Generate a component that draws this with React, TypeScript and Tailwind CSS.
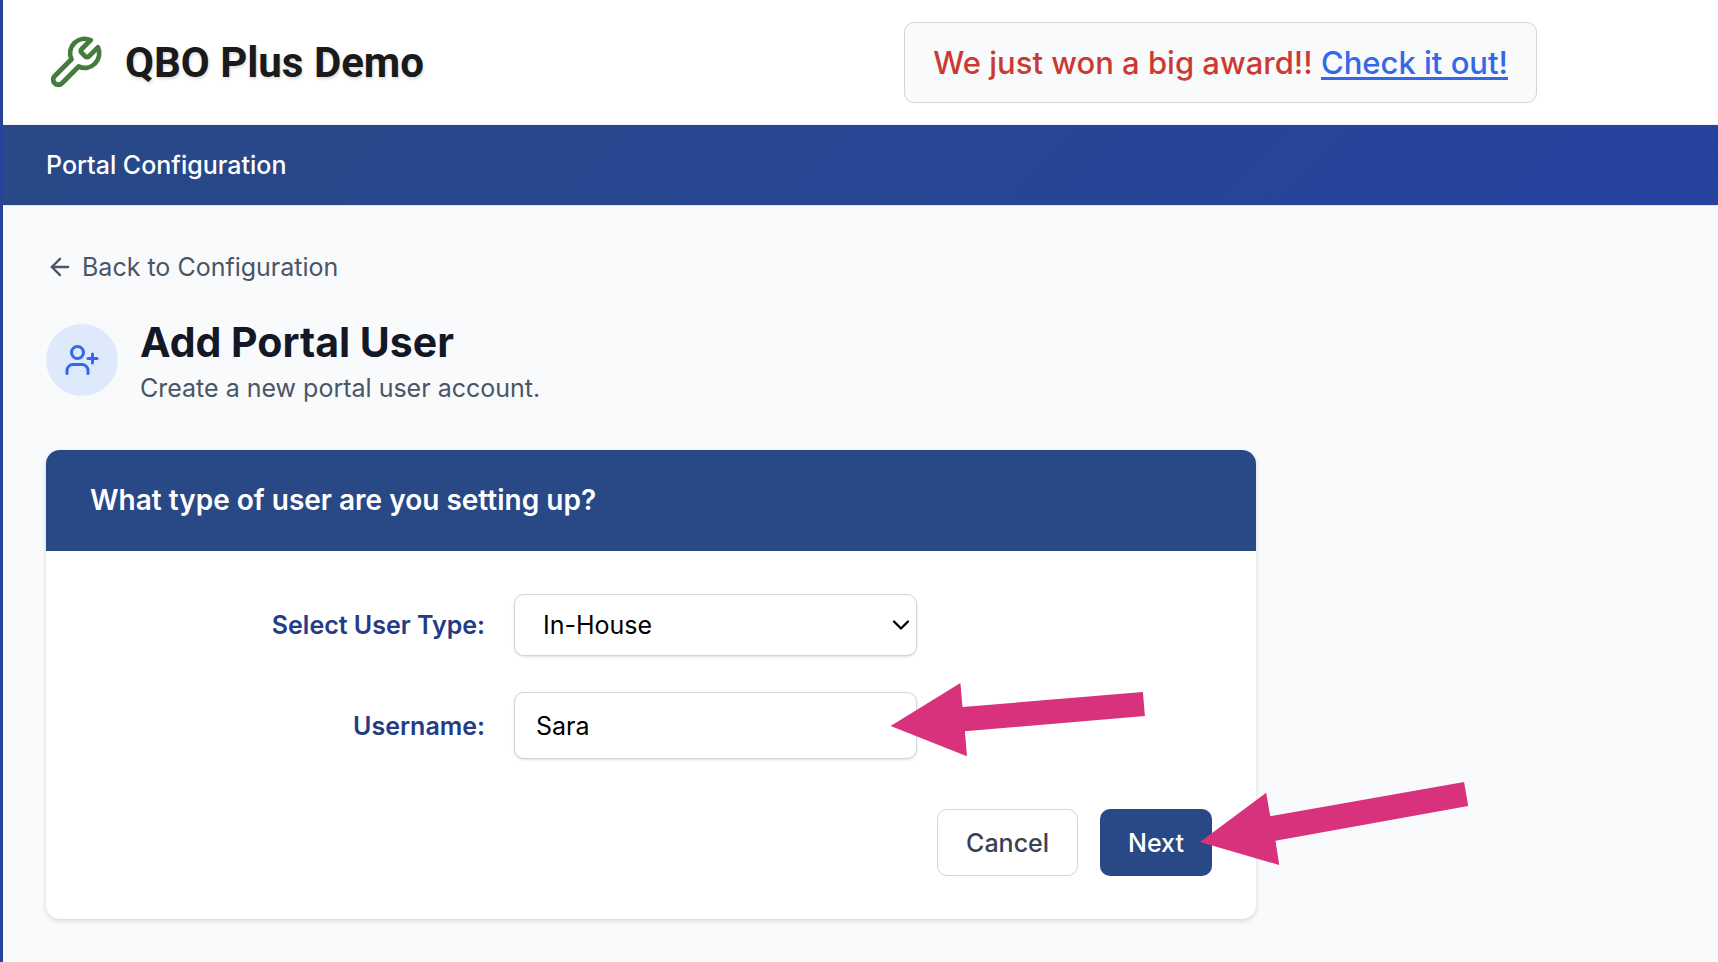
import { useState } from "react";
import { ArrowLeft, ChevronDown, UserPlus } from "lucide-react";

const Header = () => {
  return (
    <header className="border-b border-slate-100 bg-white">
      <div className="flex max-w-[1534px] items-center justify-between pt-[22px] pb-[21px] pl-[43px]">
        <div className="flex items-center gap-[21px]">
          <svg
            viewBox="0 0 24 24"
            fill="none"
            stroke="currentColor"
            strokeWidth="2"
            strokeLinecap="round"
            strokeLinejoin="round"
            className="size-[58px] text-[#437c3d]"
            aria-hidden="true"
          >
            <path d="M14.7 6.3a1 1 0 0 0 0 1.4l1.6 1.6a1 1 0 0 0 1.4 0l3.77-3.77a6 6 0 0 1-7.94 7.94l-6.91 6.91a2.12 2.12 0 0 1-3-3l6.91-6.91a6 6 0 0 1 7.94-7.94l-3.76 3.76z" />
          </svg>
          <span className="font-[Roboto,sans-serif] text-[42px] leading-[56px] font-bold text-[#1a1a1a] [text-shadow:1px_2px_3px_rgba(0,0,0,0.15)]">
            QBO Plus Demo
          </span>
        </div>
        <p className="rounded-[10px] border border-gray-300 bg-gray-50 px-[28px] py-[19px] text-[31px] leading-[41px] font-medium text-[#cb3a32]">
          We just won a big award!!{" "}
          <a
            href="#award"
            className="text-[#3568e8] underline decoration-[3px] underline-offset-[3px]"
          >
            Check it out!
          </a>
        </p>
      </div>
    </header>
  );
};

const UserForm = () => {
  const [userType, setUserType] = useState("In-House");
  const [username, setUsername] = useState("Sara");

  return (
    <form
      onSubmit={(e) => e.preventDefault()}
      className="mt-[44px] max-w-[1210px] rounded-[14px] bg-white shadow-[0_2px_5px_rgba(0,0,0,0.14)]"
    >
      <h2 className="rounded-t-[14px] bg-[#294886] px-[44px] py-[30px] text-[28px] leading-[41px] font-semibold text-white">
        What type of user are you setting up?
      </h2>
      <div className="px-[44px] py-[43px]">
        <div className="grid grid-cols-[395fr_403fr_266fr] items-center gap-[29px]">
          <label
            htmlFor="user-type"
            className="text-right font-semibold text-[#243b86]"
          >
            Select User Type:
          </label>
          <div className="relative">
            <select
              id="user-type"
              value={userType}
              onChange={(e) => setUserType(e.target.value)}
              className="block h-[62px] w-full appearance-none rounded-[10px] border border-gray-300 bg-white px-[28px] text-black shadow-sm"
            >
              <option>In-House</option>
              <option>Customer</option>
            </select>
            <ChevronDown
              className="pointer-events-none absolute top-[17px] right-[2px] size-[28px] text-black"
              strokeWidth={2}
            />
          </div>
        </div>
        <div className="mt-[36px] grid grid-cols-[395fr_403fr_266fr] items-center gap-[29px]">
          <label
            htmlFor="username"
            className="text-right font-semibold text-[#243b86]"
          >
            Username:
          </label>
          <div className="relative">
            <input
              id="username"
              type="text"
              value={username}
              onChange={(e) => setUsername(e.target.value)}
              className="block h-[67px] w-full rounded-[10px] border border-gray-300 bg-white px-[21px] text-black shadow-sm"
            />
            <svg
              viewBox="0 0 256 76"
              className="pointer-events-none absolute -top-[10px] left-[376px] h-[76px] w-[256px] max-w-none"
              aria-hidden="true"
            >
              <path
                d="M0.6 44 70.4 1 72.5 25 252.9 10 254.9 34 74.9 49.3 77 74.3Z"
                fill="#d8327c"
              />
            </svg>
          </div>
        </div>
        <div className="mt-[50px] flex justify-end gap-[22px]">
          <button
            type="button"
            className="h-[67px] rounded-[10px] border border-gray-300 bg-white px-[28px] font-medium text-gray-700"
          >
            Cancel
          </button>
          <div className="relative">
            <button
              type="submit"
              className="block h-[67px] rounded-[10px] bg-[#294886] px-[28px] font-medium text-white"
            >
              Next
            </button>
            <svg
              viewBox="0 0 270 86"
              className="pointer-events-none absolute -top-[28px] left-[100px] h-[86px] w-[270px] max-w-none"
              aria-hidden="true"
            >
              <path
                d="M0 61 66.2 11.7 70.2 35.3 264.1 1 268.2 25 75.5 59.7 79.2 84Z"
                fill="#d8327c"
              />
            </svg>
          </div>
        </div>
      </div>
    </form>
  );
};

const App = () => {
  return (
    <div className="min-h-screen border-l-[3px] border-[#27429b] bg-[#f9fafc] font-[Inter,sans-serif] text-[25px] leading-[36px]">
      <Header />
      <nav className="border-b border-slate-200 bg-[linear-gradient(135deg,#294886,#25439f)] px-[43px] py-[22px]">
        <a href="#portal" className="block font-medium text-white">
          Portal Configuration
        </a>
      </nav>
      <main className="p-[43px]">
        <a href="#back" className="flex w-fit items-center gap-[8px] text-gray-600">
          <ArrowLeft className="size-[28px]" strokeWidth={2} />
          Back to Configuration
        </a>
        <div className="mt-[29px] flex items-center gap-[22px]">
          <div className="flex size-[72px] items-center justify-center rounded-full bg-[#dfe9fc]">
            <UserPlus className="size-[36px] text-[#3568e8]" strokeWidth={2} />
          </div>
          <div>
            <h1 className="text-[41px] leading-[56px] font-bold text-[#131827]">
              Add Portal User
            </h1>
            <p className="text-gray-600">Create a new portal user account.</p>
          </div>
        </div>
        <UserForm />
      </main>
    </div>
  );
};

export default App;
